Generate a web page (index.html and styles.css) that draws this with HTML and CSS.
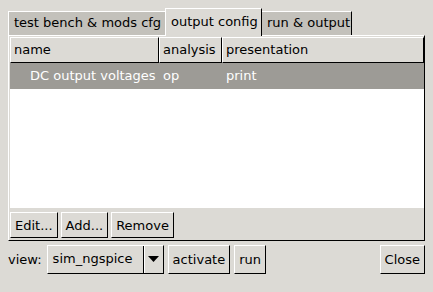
FILE: index.html
```html
<!DOCTYPE html>
<html lang="en">
<head>
  <meta charset="UTF-8">
  <title>output config</title>
  <link rel="stylesheet" href="styles.css">
</head>
<body>
  <div class="window">
    <div class="notebook">
      <div class="tabs">
        <div class="tab">test bench &amp; mods cfg</div>
        <div class="tab active">output config</div>
        <div class="tab">run &amp; output</div>
      </div>
      <div class="panel">
        <div class="tree">
          <div class="tree-head">
            <div class="col col-name">name</div>
            <div class="col col-analysis">analysis</div>
            <div class="col col-pres">presentation</div>
          </div>
          <div class="tree-row selected">
            <div class="cell col-name indent">DC output voltages</div>
            <div class="cell col-analysis">op</div>
            <div class="cell col-pres">print</div>
          </div>
        </div>
        <div class="buttons">
          <button class="btn">Edit...</button>
          <button class="btn">Add...</button>
          <button class="btn">Remove</button>
        </div>
      </div>
    </div>

    <div class="footer">
      <span class="label">view:</span>
      <div class="combo">
        <span class="combo-text">sim_ngspice</span>
        <span class="combo-arrow">
          <svg width="11" height="7" viewBox="0 0 11 7"><polygon points="0,0 11,0 5.5,6" fill="#000"/></svg>
        </span>
      </div>
      <button class="btn tall">activate</button>
      <button class="btn tall">run</button>
      <span class="spacer"></span>
      <button class="btn tall">Close</button>
    </div>
  </div>
</body>
</html>
```

FILE: styles.css
```css
* {
  box-sizing: border-box;
}
html, body {
  margin: 0;
  padding: 0;
  background: #dcdad5;
}
body {
  font-family: "DejaVu Sans", sans-serif;
  font-size: 13px;
  color: #000;
}
.window {
  width: 433px;
  height: 292px;
  padding: 8px 8px 0 8px;
}
.notebook {
  width: 417px;
}
.tabs {
  display: flex;
  align-items: flex-end;
  height: 27px;
}
.tab {
  height: 24px;
  line-height: 22px;
  padding: 0 5px;
  background: #c3c1bb;
  border-top: 1px solid #fff;
  border-left: 1px solid #fff;
  border-right: 1px solid #000;
  white-space: nowrap;
}
.tab:first-child {
  width: 157px;
  border-right: none;
}
.tab.active {
  width: 97px;
  height: 28px;
  line-height: 25px;
  background: #dcdad5;
  position: relative;
  top: 1px;
  z-index: 1;
}
.tab:last-child {
  width: 90px;
  border-left: none;
}
.panel {
  height: 206px;
  border-top: 1px solid #fff;
  border-left: 1px solid #fff;
  border-right: 1px solid #000;
  border-bottom: 1px solid #000;
  padding: 1px 0 0 1px;
  display: flex;
  flex-direction: column;
}
.tree {
  width: 414px;
  height: 171px;
  background: #fff;
}
.tree-head {
  display: flex;
  height: 26px;
}
.col {
  height: 26px;
  line-height: 24px;
  padding-left: 3px;
  background: #dcdad5;
  border-top: 1px solid #fff;
  border-left: 1px solid #fff;
  border-right: 1px solid #000;
  border-bottom: 1px solid #000;
}
.col-name {
  width: 149px;
}
.col-analysis {
  width: 63px;
}
.col-pres {
  width: 202px;
}
.tree-row {
  display: flex;
  height: 26px;
  line-height: 25px;
}
.tree-row.selected {
  background: #9d9b96;
  color: #fff;
}
.cell {
  padding-left: 4px;
}
.cell.indent {
  padding-left: 20px;
}
.buttons {
  display: flex;
  gap: 3px;
  padding-top: 4px;
}
.btn {
  font-family: "DejaVu Sans", sans-serif;
  font-size: 13px;
  color: #000;
  background: #dcdad5;
  border-top: 1px solid #fff;
  border-left: 1px solid #fff;
  border-right: 1px solid #000;
  border-bottom: 1px solid #000;
  border-radius: 0;
  height: 26px;
  padding: 0 4px;
  margin: 0;
}
.footer {
  display: flex;
  align-items: center;
  gap: 4px;
  margin-top: 4px;
  height: 29px;
}
.label {
  margin-right: 1px;
}
.combo {
  display: flex;
  align-items: stretch;
  width: 117px;
  height: 29px;
  border-top: 1px solid #fff;
  border-left: 1px solid #fff;
  border-right: 1px solid #000;
  border-bottom: 1px solid #000;
}
.combo-text {
  flex: 1;
  line-height: 26px;
  padding-left: 5px;
  border-right: 1px solid #000;
}
.combo-arrow {
  width: 19px;
  display: flex;
  align-items: center;
  justify-content: center;
  border-left: 1px solid #fff;
}
.btn.tall {
  height: 29px;
}
.spacer {
  flex: 1;
}
```
